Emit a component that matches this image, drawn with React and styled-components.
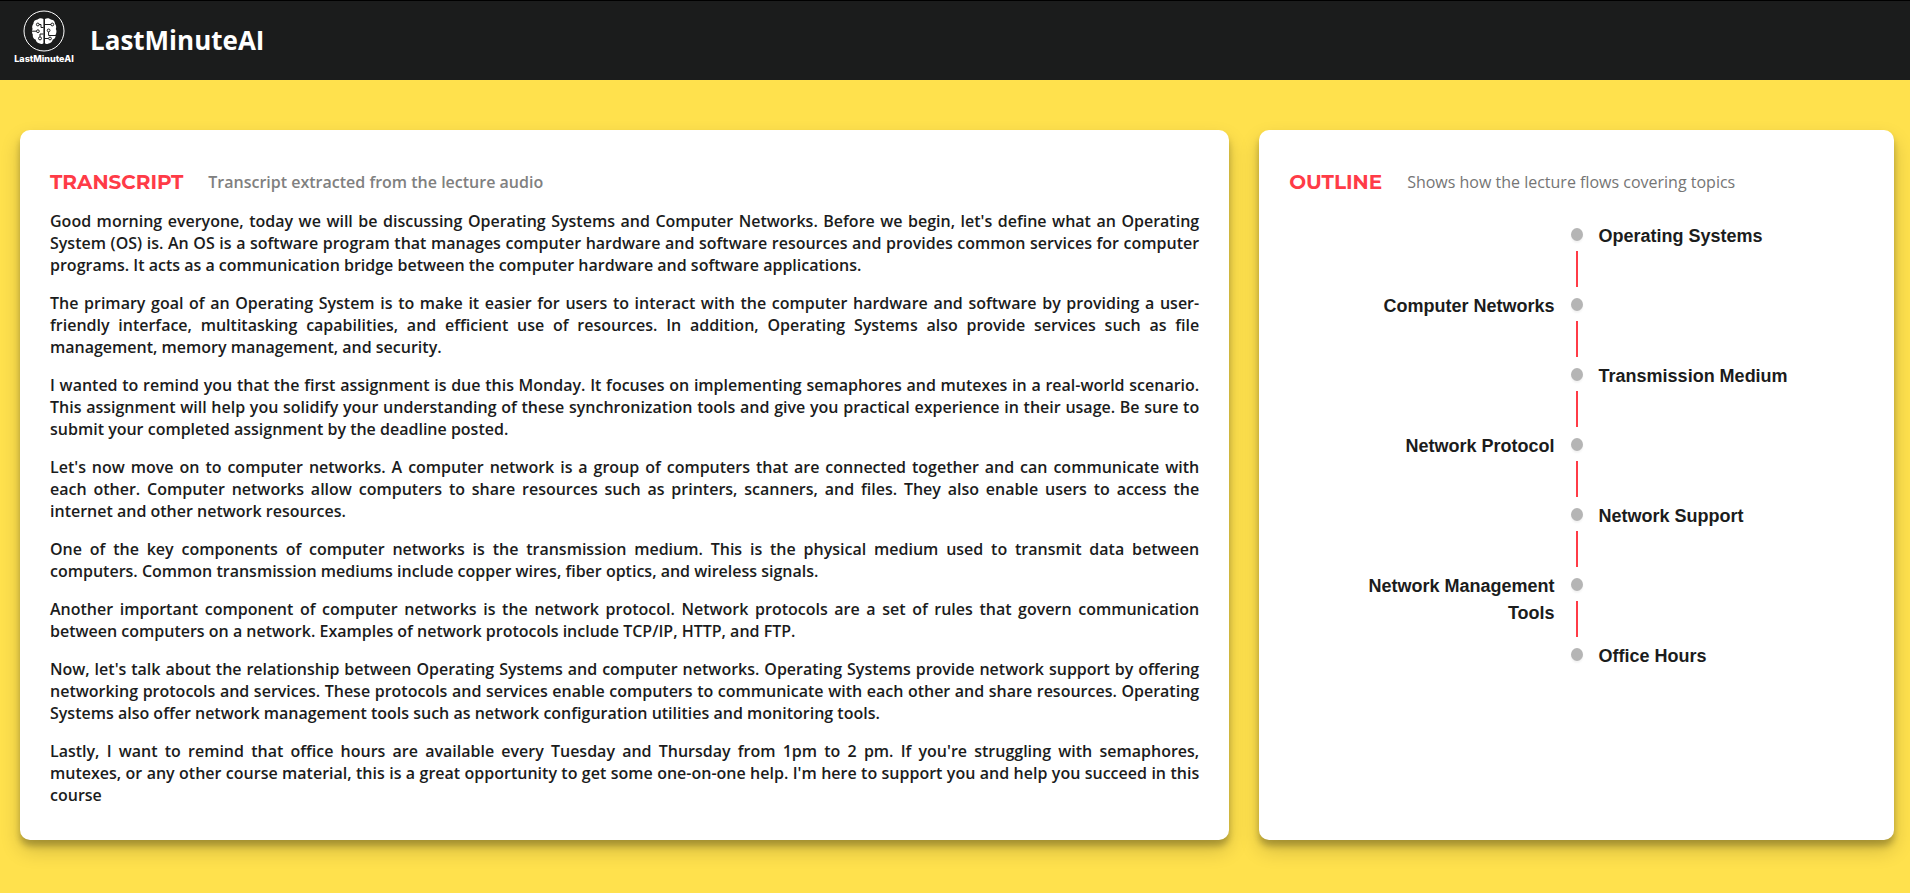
import React from "react";
import styled, { createGlobalStyle } from "styled-components";

const GlobalStyle = createGlobalStyle`
  * { box-sizing: border-box; }
  body {
    margin: 0;
    background: #ffe14d;
    color: #1b1c1c;
    font-family: "Open Sans", sans-serif;
    font-size: 16px;
    line-height: 22px;
  }
  h1, h2, p, ul { margin: 0; padding: 0; }
`;

const Header = styled.header`
  display: flex;
  align-items: center;
  gap: 17px;
  height: 80px;
  padding: 0 15px 2px;
  border-top: 1px solid #000;
  background: #1b1c1c;
  color: #fff;
`;

const Brand = styled.a`
  display: flex;
  flex-direction: column;
  align-items: center;
  width: 58px;
  padding-bottom: 4px;
  color: #fff;
  text-decoration: none;
`;

const BrandName = styled.span`
  font-family: Inter, sans-serif;
  font-size: 9px;
  font-weight: 800;
  line-height: 14px;
`;

const SiteTitle = styled.h1`
  font-size: 26px;
  font-weight: 700;
  line-height: 36px;
`;

const Main = styled.main`
  display: grid;
  grid-template-columns: 40fr 21fr;
  gap: 30px;
  padding: 50px 16px 50px 20px;
`;

const Card = styled.section`
  min-width: 0;
  padding: 37px 30px 34px;
  border-radius: 10px;
  background: #fff;
  box-shadow: 0 10px 20px rgba(0, 0, 0, 0.19), 0 6px 6px rgba(0, 0, 0, 0.23);
`;

const CardHeader = styled.div`
  display: flex;
  align-items: center;
  gap: 25px;
  margin-bottom: 14px;
`;

const CardTitle = styled.h2`
  padding-top: 2px;
  color: #ff3b47;
  font-family: Montserrat, Inter, sans-serif;
  font-size: 20px;
  font-weight: 700;
  line-height: 27px;
`;

const CardNote = styled.p`
  color: ${(p) => (p.$strong ? "#808080" : "#757575")};
  font-weight: ${(p) => (p.$strong ? 600 : 400)};
`;

const Transcript = styled.div`
  display: flex;
  flex-direction: column;
  gap: 16px;
  font-weight: 600;
  text-align: justify;
`;

const Timeline = styled.ul`
  padding: 7px 16px;
  list-style: none;
`;

const TimelineItem = styled.li`
  display: grid;
  grid-template-columns: 1fr 12px 1fr;
  height: 70px;
`;

const Rail = styled.div`
  grid-area: 1 / 2;
  display: flex;
  flex-direction: column;
  align-items: center;
`;

const Dot = styled.span`
  width: 12px;
  height: 13px;
  margin: 11px 0 10px;
  border-radius: 50%;
  background: #b5b5b5;
  box-shadow: 0 2px 2px rgba(0, 0, 0, 0.05);
`;

const Connector = styled.span`
  flex: 1;
  width: 2px;
  background: #ff3b47;
`;

const Topic = styled.span`
  grid-area: 1 / ${(p) => (p.$side === "left" ? 1 : 3)};
  padding: 6px 16px;
  font-family: "Liberation Sans", sans-serif;
  font-size: 18px;
  font-weight: 700;
  line-height: 27px;
  text-align: ${(p) => (p.$side === "left" ? "right" : "left")};
`;

const paragraphs = [
  "Good morning everyone, today we will be discussing Operating Systems and Computer Networks. Before we begin, let's define what an Operating System (OS) is. An OS is a software program that manages computer hardware and software resources and provides common services for computer programs. It acts as a communication bridge between the computer hardware and software applications.",
  "The primary goal of an Operating System is to make it easier for users to interact with the computer hardware and software by providing a user-friendly interface, multitasking capabilities, and efficient use of resources. In addition, Operating Systems also provide services such as file management, memory management, and security.",
  "I wanted to remind you that the first assignment is due this Monday. It focuses on implementing semaphores and mutexes in a real-world scenario. This assignment will help you solidify your understanding of these synchronization tools and give you practical experience in their usage. Be sure to submit your completed assignment by the deadline posted.",
  "Let's now move on to computer networks. A computer network is a group of computers that are connected together and can communicate with each other. Computer networks allow computers to share resources such as printers, scanners, and files. They also enable users to access the internet and other network resources.",
  "One of the key components of computer networks is the transmission medium. This is the physical medium used to transmit data between computers. Common transmission mediums include copper wires, fiber optics, and wireless signals.",
  "Another important component of computer networks is the network protocol. Network protocols are a set of rules that govern communication between computers on a network. Examples of network protocols include TCP/IP, HTTP, and FTP.",
  "Now, let's talk about the relationship between Operating Systems and computer networks. Operating Systems provide network support by offering networking protocols and services. These protocols and services enable computers to communicate with each other and share resources. Operating Systems also offer network management tools such as network configuration utilities and monitoring tools.",
  "Lastly, I want to remind that office hours are available every Tuesday and Thursday from 1pm to 2 pm. If you're struggling with semaphores, mutexes, or any other course material, this is a great opportunity to get some one-on-one help. I'm here to support you and help you succeed in this course",
];

const topics = [
  "Operating Systems",
  "Computer Networks",
  "Transmission Medium",
  "Network Protocol",
  "Network Support",
  "Network Management Tools",
  "Office Hours",
];

function BrainLogo() {
  return (
    <svg width="42" height="42" viewBox="0 0 42 42" fill="none" aria-hidden="true">
      <circle cx="21" cy="21" r="20" stroke="#fff" strokeWidth="1" />
      <path
        fill="#fff"
        d="M20.4 9C18.400 7.600 15.600 8.200 14.600 9.600C11.800 9.800 10.400 11.600 10.400 13.800C9.200 15.400 8.800 17.400 9.600 19C8.600 20.600 8.800 23 9.800 24.400C9.400 27 10.600 29 12.600 29.600C13 32 15 33.600 17 33.400C18.400 34.200 19.800 34 20.400 33.200Z"
      />
      <path
        fill="#fff"
        d="M22 9C24 7.600 26.800 8.200 27.800 9.600C30.600 9.800 32 11.600 32 13.800C33.200 15.400 33.600 17.400 32.800 19C33.800 20.600 33.600 23 32.600 24.400C33 27 31.800 29 29.800 29.600C29.400 32 27.400 33.600 25.400 33.400C24 34.200 22.600 34 22 33.200Z"
      />
      <g stroke="#1b1c1c" strokeWidth="1">
        <path d="M16 14.500H18V17.500H20.500M9 21.200H13.400M17 26.800V24H20.500M22 14.500H28M25.600 22V25.500H33M22 28.500H25.400" />
        <circle cx="14.800" cy="14.500" r="1.400" />
        <circle cx="14.900" cy="21.200" r="1.400" />
        <circle cx="17" cy="28.400" r="1.500" />
        <circle cx="29.300" cy="14.500" r="1.400" />
        <circle cx="25.600" cy="20.400" r="1.400" />
        <circle cx="27" cy="28.500" r="1.400" />
      </g>
    </svg>
  );
}

export default function App() {
  return (
    <>
      <GlobalStyle />
      <Header>
        <Brand href="#">
          <BrainLogo />
          <BrandName>LastMinuteAI</BrandName>
        </Brand>
        <SiteTitle>LastMinuteAI</SiteTitle>
      </Header>
      <Main>
        <Card>
          <CardHeader>
            <CardTitle>TRANSCRIPT</CardTitle>
            <CardNote $strong>Transcript extracted from the lecture audio</CardNote>
          </CardHeader>
          <Transcript>
            {paragraphs.map((text) => (
              <p key={text}>{text}</p>
            ))}
          </Transcript>
        </Card>
        <Card>
          <CardHeader>
            <CardTitle>OUTLINE</CardTitle>
            <CardNote>Shows how the lecture flows covering topics</CardNote>
          </CardHeader>
          <Timeline>
            {topics.map((topic, i) => {
              const side = i % 2 ? "left" : "right";
              return (
                <TimelineItem key={topic}>
                  <Rail>
                    <Dot />
                    {i < topics.length - 1 && <Connector />}
                  </Rail>
                  <Topic $side={side}>{topic}</Topic>
                </TimelineItem>
              );
            })}
          </Timeline>
        </Card>
      </Main>
    </>
  );
}
